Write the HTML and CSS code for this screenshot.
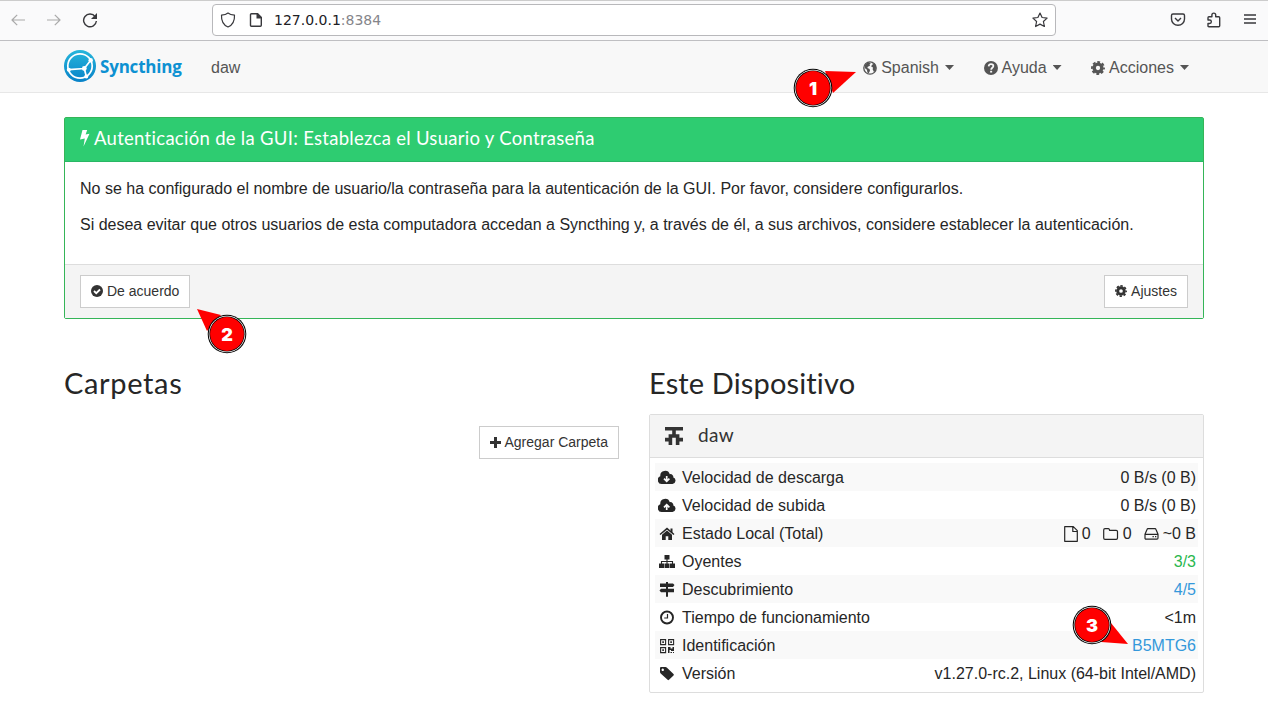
FILE: index.html
```html
<!DOCTYPE html>
<html lang="es">
<head>
<meta charset="utf-8">
<title>daw | Syncthing</title>
<link rel="stylesheet" href="styles.css">
</head>
<body>
<svg class="sprite" width="0" height="0">
  <symbol id="cog" viewBox="0 0 16 16"><circle cx="8" cy="8" r="4.400" fill="none" stroke="currentColor" stroke-width="3.900"/><circle cx="8" cy="8" r="6.900" fill="none" stroke="currentColor" stroke-width="2.100" stroke-dasharray="3.200 2.219" stroke-dashoffset="1.600"/></symbol>
  <symbol id="cloud" viewBox="0 0 18 16"><path d="M4.200 14A4 4 0 0 1 2.300 6.300 4.900 4.900 0 0 1 11.800 4.200 2.900 2.900 0 0 1 15.300 7.600a3.300 3.300 0 0 1-.8 6.400z" fill="currentColor"/></symbol>
</svg>

<header class="toolbar">
  <div class="toolbar-nav">
    <svg class="i16 muted" viewBox="0 0 16 16"><path d="M15 8H2M7.200 2.800 2 8l5.200 5.200" class="line"/></svg>
    <svg class="i16 muted" viewBox="0 0 16 16"><path d="M1 8h13M8.800 2.800 14 8l-5.200 5.200" class="line"/></svg>
    <svg class="i16" viewBox="0 0 16 16"><path d="M13.200 4.600A6.400 6.400 0 1 0 14.400 9" class="line thick"/><path d="M15 1v6H9z" fill="currentColor"/></svg>
  </div>
  <div class="address">
    <svg class="i16" viewBox="0 0 16 16"><path d="M8 1C6.200 2.500 4 3 1.500 3.200 1.200 9 3.500 13 8 15c4.500-2 6.800-6 6.500-11.800C12 3 9.800 2.500 8 1z" class="line"/></svg>
    <svg class="i16 page" viewBox="0 0 16 16"><path d="M3.500 1.700h5.800l4 4v7.600q0 1-1 1H3.500q-1 0-1-1V2.700q0-1 1-1z" class="line thick"/><path d="M8.500 1h1.300L14 5.200v1.300H8.500z" fill="currentColor"/></svg>
    <span class="url">127.0.0.1<span class="port">:8384</span></span>
    <svg class="i16 star" viewBox="0 0 16 16"><path d="m8 1 2.100 4.500 5 .6-3.700 3.400 1 5L8 12.100l-4.400 2.400 1-5L.9 6.100l5-.6z" class="line"/></svg>
  </div>
  <div class="toolbar-actions">
    <svg class="i16" viewBox="0 0 16 16"><path d="M3 2h10q1.500 0 1.500 1.500V7a6.500 6.200 0 0 1-13 0V3.500Q1.500 2 3 2zM5 6l3 3 3-3" class="line thick"/></svg>
    <svg class="i16" viewBox="0 0 16 16"><path d="M2 8V5.700q0-.9.900-.9h3V3a1.900 1.900 0 0 1 3.800 0v1.800h3.100q.9 0 .9.900v8.100q0 .9-.9.900H2.900q-.9 0-.9-.9v-2.300h1.600a1.750 1.750 0 0 0 0-3.500z" class="line thick"/></svg>
    <svg class="i16" viewBox="0 0 16 16"><path d="M2 3h12M2 7h12M2 11h12" class="line thick"/></svg>
  </div>
</header>

<nav class="navbar">
  <div class="container navbar-row">
    <div class="brand">
      <svg class="logo" viewBox="0 0 32 32"><defs><linearGradient id="lg" x2="0" y2="1"><stop stop-color="#26b6db"/><stop offset="1" stop-color="#0882c8"/></linearGradient></defs><circle cx="16" cy="16" r="16" fill="url(#lg)"/><circle cx="16" cy="16" r="12.200" fill="none" stroke="#fff" stroke-width="1.700"/><path d="M4.800 19.700 20.300 18.500l6.200-8M20.300 18.500l2 8" fill="none" stroke="#fff" stroke-width="1.700"/><circle cx="20.300" cy="18.500" r="2.400" fill="#fff"/><circle cx="26.700" cy="10.300" r="2.200" fill="#fff"/><circle cx="22.300" cy="26.500" r="2" fill="#fff"/><circle cx="4.800" cy="19.700" r="2" fill="#fff"/></svg>
      <span class="brand-name">Syncthing</span>
    </div>
    <span class="device-name">daw</span>
    <div class="menu">
      <span class="menu-item"><svg class="i14" viewBox="0 0 16 16"><circle cx="8" cy="8" r="7.100" fill="none" stroke="currentColor" stroke-width="1.500"/><path d="M2 4.500 5.500 1.500 9 2.200 7.500 4l.5 1.500-2.500 1-.5 1.500 2.500 1 .5 2-1.500 3-1.500-1-.5-3L2 8zM10 3l3-.5 2 3-.5 5-2 2-1.500-3 .5-2-2-1 .5-2 1.500-.5z" fill="currentColor"/></svg>Spanish<b class="caret"></b></span>
      <span class="menu-item"><svg class="i14" viewBox="0 0 16 16"><circle cx="8" cy="8" r="8" fill="currentColor"/><path d="M5.300 6.100C5.500 4 6.700 3.500 8 3.500c1.700 0 2.700 1 2.700 2.300C10.700 7.800 8.200 7.700 8.200 10" fill="none" stroke="#f8f8f8" stroke-width="2"/><path d="M7 11.200h2.300v2H7z" fill="#f8f8f8"/></svg>Ayuda<b class="caret"></b></span>
      <span class="menu-item"><svg class="i14"><use href="#cog"/></svg>Acciones<b class="caret"></b></span>
    </div>
  </div>
</nav>

<main class="container">
  <section class="notice">
    <h3 class="notice-head"><svg class="bolt" viewBox="0 0 9 16"><path d="M2.500 0h4.700L5.600 4.600 9.500 3.800 3.500 16.500l1.300-8L0 9.600z" fill="currentColor"/></svg><span>Autenticación de la GUI: Establezca el Usuario y Contraseña</span></h3>
    <div class="notice-body">
      <p>No se ha configurado el nombre de usuario/la contraseña para la autenticación de la GUI. Por favor, considere configurarlos.</p>
      <p>Si desea evitar que otros usuarios de esta computadora accedan a Syncthing y, a través de él, a sus archivos, considere establecer la autenticación.</p>
    </div>
    <div class="notice-foot">
      <button class="btn"><svg class="i12" viewBox="0 0 16 16"><circle cx="8" cy="8" r="8" fill="currentColor"/><path d="m4 8 3 3 5-5" fill="none" stroke="#fff" stroke-width="2.400"/></svg>De acuerdo</button>
      <button class="btn"><svg class="i12"><use href="#cog"/></svg>Ajustes</button>
    </div>
  </section>

  <div class="columns">
    <section class="col">
      <h2 class="folders-title">Carpetas</h2>
      <div class="folder-actions"><button class="btn add"><svg class="plus" viewBox="0 0 11 11"><path d="M5.500 0v11M0 5.500h11" stroke="currentColor" stroke-width="3"/></svg>Agregar Carpeta</button></div>
    </section>
    <section class="col">
      <h2 class="this-title">Este Dispositivo</h2>
      <div class="device">
        <div class="device-head">
          <svg class="identicon" viewBox="0 0 18 18"><path d="M0 0h18v3.600H0zM7.200 3.600h3.600v3.600H7.200zM3.600 7.200h10.800v3.600H3.600zM0 10.800h7.200v3.600H0zM10.800 10.800H18v3.600h-7.200zM3.600 14.400h3.600V18H3.600zM10.800 14.400h3.600V18h-3.600z" fill="currentColor"/></svg>
          <span class="device-label">daw</span>
        </div>
        <ul class="rows">
          <li><svg class="ico" viewBox="0 0 18 16"><use href="#cloud"/><path d="M8.700 6v5M6 8.700l2.700 2.700 2.700-2.700" fill="none" stroke="#f9f9f9" stroke-width="1.700"/></svg><span>Velocidad de descarga</span><span class="val">0 B/s (0 B)</span></li>
          <li><svg class="ico" viewBox="0 0 18 16"><use href="#cloud"/><path d="M8.700 12V7M6 9.300l2.700-2.700 2.700 2.700" fill="none" stroke="#fff" stroke-width="1.700"/></svg><span>Velocidad de subida</span><span class="val">0 B/s (0 B)</span></li>
          <li><svg class="ico" viewBox="0 0 18 16"><path d="M2 8.500 9 2.600l7 5.900" fill="none" stroke="currentColor" stroke-width="1.500"/><path d="M12.500 2.500h2V7l-2-1.500zM4 8.800l5-4.200 5 4.200V14h-3.700v-3.800H7.700V14H4z" fill="currentColor"/></svg><span>Estado Local (Total)</span>
            <span class="val stats">
              <span><svg class="file" viewBox="0 0 14 16"><path d="M.7.700h8.600l4 4v10.600H.7zM8.800.700v4.800h4.500" class="line"/></svg>0</span>
              <span><svg class="folder" viewBox="0 0 16 14"><path d="M.7 11V3q0-1.300 1.300-1.300h3.300q1.200 0 1.200 1.600h6.700q1.300 0 1.300 1.300V11q0 1.300-1.300 1.300H2Q.7 12.300.7 11z" class="line"/></svg>0</span>
              <span><svg class="disk" viewBox="0 0 15 14"><path d="M1 7.300 3 2.500q.3-.8 1-.8h7q.7 0 1 .8l2 4.800V11q0 1.200-1 1.200H2Q1 12.200 1 11zM1 7.300h13M8.500 9.700h1.300M11 9.700h1.300" class="line"/></svg>~0 B</span>
            </span></li>
          <li><svg class="ico" viewBox="0 0 18 16"><path d="M6.500 1h5v4.500h-5zM1 9.500h5V14H1zM6.500 9.500h5V14h-5zM12 9.500h5V14h-5z" fill="currentColor"/><path d="M9 5v5M3.500 10V7.500h11V10" fill="none" stroke="currentColor" stroke-width="1.100"/></svg><span>Oyentes</span><span class="val green">3/3</span></li>
          <li><svg class="ico" viewBox="0 0 18 16"><path d="M8 0h2v1.500h5l1.500 1.600L15 5h-5v1.700h6v3.500h-6v4.500H8v-4.500H3L1.500 8.500 3 6.700h5V5H2V1.500h6z" fill="currentColor"/></svg><span>Descubrimiento</span><span class="val blue">4/5</span></li>
          <li><svg class="ico" viewBox="0 0 18 16"><circle cx="9" cy="7.500" r="6" fill="none" stroke="currentColor" stroke-width="1.900"/><path d="M9.500 4v4H6.200" fill="none" stroke="currentColor" stroke-width="1.200"/></svg><span>Tiempo de funcionamiento</span><span class="val">&lt;1m</span></li>
          <li><svg class="ico" viewBox="0 0 18 16"><path d="M2.600 1.600h5v5h-5zM10.600 1.600h5v5h-5zM2.600 9.600h5v5h-5z" fill="none" stroke="currentColor" stroke-width="1.100"/><path d="M4.300 3.300h1.600v1.600H4.300zM12.300 3.300h1.600v1.600h-1.600zM4.300 11.300h1.600v1.600H4.300zM10 9h2.500v1.500h2V9H16v4h-3v-1h-1.500v3H10zM12.500 14H14v1h-1.500zM15 14h1v1h-1z" fill="currentColor"/></svg><span>Identificación</span><span class="val blue">B5MTG6</span></li>
          <li><svg class="ico" viewBox="0 0 18 16"><path fill-rule="evenodd" d="M3 1h4.500q.8 0 1.500.7L15.500 8q.8.700 0 1.500L11 13.800q-.7.700-1.400 0L2.700 7.500Q2 6.800 2 6V2q0-1 1-1zm1.700 1.600a1.200 1.200 0 1 0 .1 0z" fill="currentColor"/></svg><span>Versión</span><span class="val">v1.27.0-rc.2, Linux (64-bit Intel/AMD)</span></li>
        </ul>
      </div>
    </section>
  </div>
</main>

<svg class="callout callout-language" viewBox="-20 -20 64 40"><path d="M12-17 43-16 20 5z" class="pin"/><circle r="19.300" fill="#000"/><circle r="18.300" fill="#fff"/><circle r="17.600" fill="#000"/><circle r="16.900" class="pin"/><text y="6.600">1</text></svg>
<svg class="callout callout-accept" viewBox="-31 -27 52 48"><path d="M-30-25-6-19-20-3z" class="pin"/><circle r="19.300" fill="#000"/><circle r="18.300" fill="#fff"/><circle r="17.600" fill="#000"/><circle r="16.900" class="pin"/><text y="6.600">2</text></svg>
<svg class="callout callout-id" viewBox="-20 -20 60 42"><path d="M19-2 36 19 9 17z" class="pin"/><circle r="19.300" fill="#000"/><circle r="18.300" fill="#fff"/><circle r="17.600" fill="#000"/><circle r="16.900" class="pin"/><text y="6.600">3</text></svg>
</body>
</html>
```
FILE: styles.css
```css
* { box-sizing: border-box; }
body { margin: 0; height: 709px; overflow: hidden; position: relative; background: #fff; color: #262626; font: 16px/20px "Liberation Sans", Arial, sans-serif; }
h2, h3, p, ul { margin: 0; padding: 0; font-weight: 400; }
svg { flex: none; display: block; }
.sprite { position: absolute; }
.i16 { width: 16px; height: 16px; }
.i14 { width: 14px; height: 14px; }
.i12 { width: 12px; height: 12px; }
.line { fill: none; stroke: currentColor; stroke-width: 1.2; stroke-linejoin: round; }
.thick { stroke-width: 1.4; }

.toolbar { height: 41px; padding-bottom: 1px; display: flex; align-items: center; background: #fafafb; border-top: 1px solid #ccc; border-bottom: 1px solid #bfbfc2; color: #38383c; }
.toolbar-nav { width: 212px; padding-left: 10px; display: flex; gap: 20px; }
.muted { color: #aaa; }
.address { width: 844px; height: 32px; padding: 0 7px; display: flex; align-items: center; border: 1px solid #b8b8bb; border-radius: 4px; background: #fff; }
.page { margin-left: 12px; }
.url { margin-left: 10px; font: 14px/20px "DejaVu Sans", sans-serif; color: #202024; }
.port { color: #85858a; }
.star { margin-left: auto; }
.toolbar-actions { margin-left: auto; padding-right: 10px; display: flex; gap: 20px; }

.container { width: 1140px; margin: 0 auto; }
.navbar { height: 52px; background: #f8f8f8; border-bottom: 1px solid #e7e7e7; color: #555; }
.navbar-row { height: 51px; display: flex; align-items: center; }
.brand { width: 147px; padding-bottom: 1px; display: flex; align-items: center; gap: 4px; }
.logo { width: 32px; height: 32px; }
.brand-name { padding-top: 2px; font: 700 17px/20px "Open Sans", sans-serif; letter-spacing: -.2px; color: #0d91d2; }
.device-name { padding-top: 2px; }
.menu { margin-left: auto; padding: 2px 15px 0 0; display: flex; gap: 29.5px; }
.menu-item { display: flex; align-items: center; gap: 4px; }
.caret { width: 9px; height: 5px; margin-left: 2px; background: #555; clip-path: polygon(0 0, 100% 0, 50% 100%); }

.notice { margin-top: 24px; height: 202px; border: 1px solid #35b558; border-radius: 2px; display: flex; flex-direction: column; }
.notice-head { height: 44px; padding: 0 15px 3px; display: flex; align-items: center; gap: 5px; background: #2ecc71; border-bottom: 1px solid #29b765; color: #fff; font: 18.5px/20px Lato, sans-serif; letter-spacing: .29px; }
.bolt { width: 9px; height: 16px; overflow: visible; }
.notice-body { flex: 1; padding: 17px 15px 0; display: flex; flex-direction: column; gap: 16px; }
.notice-foot { height: 54px; padding: 10px 15px; display: flex; justify-content: space-between; background: #f4f4f4; border-top: 1px solid #ddd; }
.btn { height: 33px; padding: 0 10px 1px; display: inline-flex; align-items: center; gap: 4px; border: 1px solid #ccc; background: #fff; color: #333; font: 14px/20px "Liberation Sans", Arial, sans-serif; }
.add { gap: 3px; }
.plus { width: 11px; height: 11px; }

.columns { margin-top: 47px; display: grid; grid-template-columns: 555px 555px; gap: 30px; }
h2 { font: 29px/34px Lato, sans-serif; }
.folders-title { letter-spacing: .65px; }
.this-title { letter-spacing: .14px; }
.folder-actions { margin-top: 26px; display: flex; justify-content: flex-end; }
.device { margin-top: 14px; height: 279px; border: 1px solid #ddd; border-radius: 2px; }
.device-head { height: 43px; padding: 0 15px 1px; display: flex; align-items: center; gap: 15px; background: #f4f4f4; border-bottom: 1px solid #ddd; font: 19px/20px Lato, sans-serif; letter-spacing: .3px; color: #333; }
.device-label { padding-bottom: 2px; }
.identicon { width: 18px; height: 18px; }
.rows { padding: 5px 5px 0; list-style: none; }
.rows li { height: 28px; padding: 1px 2px 0 3px; display: flex; align-items: center; gap: 6px; }
.rows li:nth-child(odd) { background: #f9f9f9; }
.ico { width: 18px; height: 16px; }
.val { margin-left: auto; }
.stats, .stats span { display: flex; align-items: center; }
.stats { gap: 12px; }
.stats span { gap: 4px; }
.file { width: 14px; height: 16px; }
.folder { width: 16px; height: 14px; }
.disk { width: 15px; height: 14px; }
.green { color: #29b74e; }
.blue { color: #3498db; }

.callout { position: absolute; }
.callout-language { left: 793px; top: 68px; width: 64px; height: 40px; }
.callout-accept { left: 196px; top: 307px; width: 52px; height: 48px; }
.callout-id { left: 1072px; top: 605px; width: 60px; height: 42px; }
.pin { fill: #f00; }
.callout text { fill: #fff; text-anchor: middle; font: 900 18px Inter, sans-serif; }
```
